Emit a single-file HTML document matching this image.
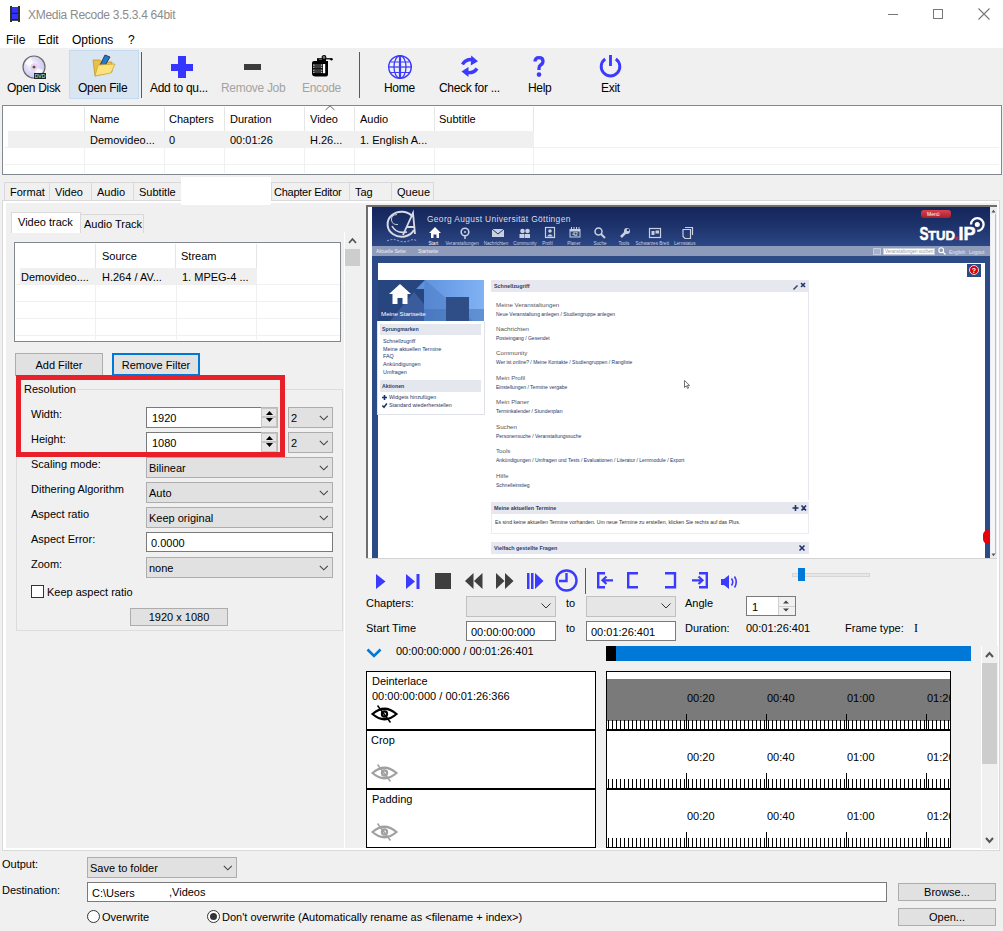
<!DOCTYPE html><html><head><meta charset="utf-8"><style>
html,body{margin:0;padding:0}
body{width:1003px;height:931px;overflow:hidden;position:relative;background:#f0f0f0;font-family:"Liberation Sans", sans-serif;font-size:11px;color:#000}
.a{position:absolute;box-sizing:border-box}
.t{white-space:nowrap;line-height:14px;height:14px}
svg.a{overflow:visible}
</style></head><body>
<div class="a" style="left:0px;top:0px;width:1003px;height:30px;background:#fff"></div>
<svg class="a" style="left:10px;top:6px;" width="10" height="16" viewBox="0 0 10 16"><rect x="2" y="1" width="6" height="14" fill="#1c1c6a"/><rect x="2" y="1" width="6" height="0.8" fill="#555040"/><rect x="2" y="14.2" width="6" height="0.8" fill="#555040"/><rect x="2" y="2" width="6" height="4.8" fill="#3434ff"/><rect x="2" y="8" width="6" height="5" fill="#3434ff"/><rect x="0" y="0" width="2" height="16" fill="#2e2e2a"/><rect x="8" y="0" width="2" height="16" fill="#2e2e2a"/></svg>
<div class="a t" style="left:28px;top:8px;color:#8c8c8c;font-size:12px;letter-spacing:-0.28px">XMedia Recode 3.5.3.4 64bit</div>
<div class="a" style="left:888px;top:14px;width:10px;height:1px;background:#777"></div>
<div class="a" style="left:933px;top:9px;width:10px;height:10px;border:1px solid #777"></div>
<svg class="a" style="left:978px;top:8px;" width="12" height="12" viewBox="0 0 12 12"><path d="M0.5 0.5 L11.5 11.5 M11.5 0.5 L0.5 11.5" stroke="#777" stroke-width="1.1"/></svg>
<div class="a" style="left:0px;top:30px;width:1003px;height:18px;background:#fff"></div>
<div class="a t" style="left:6px;top:33px;font-size:12px">File</div>
<div class="a t" style="left:38px;top:33px;font-size:12px">Edit</div>
<div class="a t" style="left:72px;top:33px;font-size:12px">Options</div>
<div class="a t" style="left:128px;top:33px;font-size:12px">?</div>
<div class="a" style="left:69px;top:50px;width:70px;height:49px;background:#d9e5f1;border:1px solid #c3dcf3"></div>
<div class="a" style="left:141px;top:52px;width:1px;height:46px;background:#5a5a5a"></div>
<div class="a" style="left:359px;top:52px;width:1px;height:46px;background:#5a5a5a"></div>
<div class="a t" style="left:7px;top:81px;font-size:12px;letter-spacing:-0.3px">Open Disk</div>
<div class="a t" style="left:78px;top:81px;font-size:12px;letter-spacing:-0.3px">Open File</div>
<div class="a t" style="left:150px;top:81px;font-size:12px;letter-spacing:-0.3px">Add to qu...</div>
<div class="a t" style="left:221px;top:81px;font-size:12px;letter-spacing:-0.3px;color:#a3a3a3">Remove Job</div>
<div class="a t" style="left:302px;top:81px;font-size:12px;letter-spacing:-0.3px;color:#a3a3a3">Encode</div>
<div class="a t" style="left:384px;top:81px;font-size:12px;letter-spacing:-0.3px">Home</div>
<div class="a t" style="left:439px;top:81px;font-size:12px;letter-spacing:-0.3px">Check for ...</div>
<div class="a t" style="left:528px;top:81px;font-size:12px;letter-spacing:-0.3px">Help</div>
<div class="a t" style="left:601px;top:81px;font-size:12px;letter-spacing:-0.3px">Exit</div>
<svg class="a" style="left:22px;top:55px;" width="25" height="25" viewBox="0 0 25 25"><defs><radialGradient id="dg" cx="0.4" cy="0.4" r="0.7"><stop offset="0" stop-color="#fff"/><stop offset="0.5" stop-color="#dcd8f6"/><stop offset="1" stop-color="#c9c4ef"/></radialGradient></defs>
<circle cx="12" cy="12" r="11" fill="url(#dg)" stroke="#6a6a6a" stroke-width="1.2"/>
<path d="M12 12 L3 9 A10 10 0 0 1 9 2.5 Z" fill="#fff" opacity="0.8"/>
<path d="M12 12 L21 15 A10 10 0 0 1 15 21.5 Z" fill="#fff" opacity="0.8"/>
<circle cx="12" cy="12" r="3.2" fill="#f4e8f4" stroke="#e6b6e6" stroke-width="0.8"/>
<circle cx="12" cy="12" r="1.6" fill="#555"/>
<rect x="12" y="18" width="12" height="6" fill="#1c2626"/>
<text x="18" y="23" font-size="5" fill="#cfe" text-anchor="middle" font-family="Liberation Sans">DVD</text></svg>
<svg class="a" style="left:92px;top:54px;" width="24" height="24" viewBox="0 0 24 24"><path d="M1 6 L8 6 L10 8 L20 8 L20 18 L3 22 Z" fill="#e8c14a" stroke="#b89020" stroke-width="0.7"/>
<path d="M13 1 L18 3 L11 15 L7 13 Z" fill="#1d7ad8" stroke="#333" stroke-width="0.9"/>
<path d="M3 22 L6 11 L23 10 L19 19 Z" fill="#fbe27c" stroke="#c9a030" stroke-width="0.7"/></svg>
<div class="a" style="left:171px;top:64px;width:22px;height:7px;background:#3535ff"></div>
<div class="a" style="left:178px;top:56px;width:8px;height:22px;background:#3535ff"></div>
<div class="a" style="left:244px;top:64px;width:17px;height:6px;background:#3c3c3c"></div>
<svg class="a" style="left:310px;top:54px;" width="24" height="25" viewBox="0 0 24 25"><path d="M4 7 L18 7 L18 20.5 Q18 22.5 16 22.5 L5.5 22.5 Q2 22.5 2 19.5 L2 9 Q2 7 4 7 Z" fill="#000"/>
<rect x="7" y="4.2" width="9" height="3.2" fill="#000"/><rect x="9" y="5" width="3" height="1" fill="#555"/>
<circle cx="14" cy="3.4" r="1.9" fill="#777" stroke="#000" stroke-width="1.1"/>
<path d="M15.8 4.8 L21.5 4.8" stroke="#000" stroke-width="1.3"/><circle cx="21.5" cy="5.2" r="1.2" fill="#000"/>
<rect x="3" y="10" width="9.4" height="9.2" fill="#3c3c3c"/><rect x="3" y="14.3" width="9.4" height="0.8" fill="#000"/>
<g fill="#ddd"><rect x="3.3" y="10.5" width="1" height="1.3"/><rect x="3.3" y="13" width="1" height="0.9"/><rect x="3.3" y="15.8" width="1" height="1.1"/><rect x="3.3" y="18" width="1" height="1"/>
<rect x="11.2" y="10.5" width="1" height="1.3"/><rect x="11.2" y="13" width="1" height="0.9"/><rect x="11.2" y="15.8" width="1" height="1.1"/><rect x="11.2" y="18" width="1" height="1"/></g>
<rect x="13" y="10" width="2.2" height="9.2" fill="#fff"/></svg>
<svg class="a" style="left:387px;top:54px;" width="26" height="26" viewBox="0 0 26 26"><g fill="none" stroke="#3b3bff"><circle cx="13" cy="13" r="11.3" stroke-width="1.4"/><ellipse cx="13" cy="13" rx="6" ry="11.3" stroke-width="1.3"/><line x1="13" y1="1.5" x2="13" y2="24.5" stroke-width="2.2"/><path d="M1.8 13 H24.2" stroke-width="1.3"/><path d="M3.5 8 H22.5 M3.5 18.5 H22.5" stroke-width="1.2"/></g></svg>
<svg class="a" style="left:461px;top:55px;" width="18" height="23" viewBox="0 0 18 23"><g fill="#3b3bff"><path d="M1.5 9.5 Q4.5 4.2 11 4.6" stroke="#3b3bff" stroke-width="3.4" fill="none"/><path d="M10.2 0.5 L17 6.3 L9.8 10.5 Z"/>
<path d="M16 13.5 Q13 18.2 6.5 17.6" stroke="#3b3bff" stroke-width="3.4" fill="none"/><path d="M7.5 22 L0.5 16.6 L7.5 12 Z"/></g></svg>
<svg class="a" style="left:531px;top:55px;" width="16" height="24" viewBox="0 0 16 24"><path d="M4 6.5 Q4 2.6 8 2.6 Q12 2.6 12 6.2 Q12 8.6 9.6 10 Q8 11 8 13.2 V15" fill="none" stroke="#3b3bff" stroke-width="3.3"/><circle cx="8" cy="19.6" r="2.3" fill="#3b3bff"/></svg>
<svg class="a" style="left:598px;top:54px;" width="26" height="26" viewBox="0 0 26 26"><g fill="none" stroke="#3b3bff" stroke-width="2.9"><path d="M7.2 5 A9.3 9.3 0 1 0 17.8 5"/><line x1="12.5" y1="1" x2="12.5" y2="12"/></g></svg>
<div class="a" style="left:2px;top:105px;width:1000px;height:70px;background:#fff;border:1px solid #828790"></div>
<div class="a" style="left:84px;top:107px;width:1px;height:24px;background:#e5e5e5"></div>
<div class="a" style="left:164px;top:107px;width:1px;height:24px;background:#e5e5e5"></div>
<div class="a" style="left:224px;top:107px;width:1px;height:24px;background:#e5e5e5"></div>
<div class="a" style="left:304px;top:107px;width:1px;height:24px;background:#e5e5e5"></div>
<div class="a" style="left:354px;top:107px;width:1px;height:24px;background:#e5e5e5"></div>
<div class="a" style="left:434px;top:107px;width:1px;height:24px;background:#e5e5e5"></div>
<div class="a" style="left:533px;top:107px;width:1px;height:24px;background:#e5e5e5"></div>
<div class="a" style="left:8px;top:131px;width:526px;height:16px;background:#f0f0f0"></div>
<div class="a" style="left:4px;top:147px;width:995px;height:1px;background:#f0f0f0"></div>
<div class="a" style="left:4px;top:164px;width:995px;height:1px;background:#f0f0f0"></div>
<div class="a" style="left:84px;top:147px;width:1px;height:26px;background:#f0f0f0"></div>
<div class="a" style="left:164px;top:147px;width:1px;height:26px;background:#f0f0f0"></div>
<div class="a" style="left:224px;top:147px;width:1px;height:26px;background:#f0f0f0"></div>
<div class="a" style="left:304px;top:147px;width:1px;height:26px;background:#f0f0f0"></div>
<div class="a" style="left:354px;top:147px;width:1px;height:26px;background:#f0f0f0"></div>
<div class="a" style="left:434px;top:147px;width:1px;height:26px;background:#f0f0f0"></div>
<div class="a" style="left:533px;top:147px;width:1px;height:26px;background:#f0f0f0"></div>
<div class="a t" style="left:90px;top:112px;">Name</div>
<div class="a t" style="left:169px;top:112px;">Chapters</div>
<div class="a t" style="left:230px;top:112px;">Duration</div>
<div class="a t" style="left:310px;top:112px;">Video</div>
<div class="a t" style="left:360px;top:112px;">Audio</div>
<div class="a t" style="left:439px;top:112px;">Subtitle</div>
<div class="a t" style="left:90px;top:133px;">Demovideo...</div>
<div class="a t" style="left:169px;top:133px;">0</div>
<div class="a t" style="left:230px;top:133px;">00:01:26</div>
<div class="a t" style="left:310px;top:133px;">H.26...</div>
<div class="a t" style="left:360px;top:133px;">1. English A...</div>
<svg class="a" style="left:325px;top:105px;" width="10" height="6" viewBox="0 0 10 6"><path d="M0.5 5 L5 0.8 L9.5 5" fill="none" stroke="#666" stroke-width="1"/></svg>
<div class="a" style="left:4px;top:182px;width:46px;height:19px;background:#f0f0f0;border:1px solid #d9d9d9"></div>
<div class="a t" style="left:10px;top:185px;">Format</div>
<div class="a" style="left:49px;top:182px;width:43px;height:19px;background:#f0f0f0;border:1px solid #d9d9d9"></div>
<div class="a t" style="left:55px;top:185px;">Video</div>
<div class="a" style="left:91px;top:182px;width:43px;height:19px;background:#f0f0f0;border:1px solid #d9d9d9"></div>
<div class="a t" style="left:97px;top:185px;">Audio</div>
<div class="a" style="left:133px;top:182px;width:49px;height:19px;background:#f0f0f0;border:1px solid #d9d9d9"></div>
<div class="a t" style="left:139px;top:185px;">Subtitle</div>
<div class="a" style="left:271px;top:182px;width:79px;height:19px;background:#f0f0f0;border:1px solid #d9d9d9"></div>
<div class="a t" style="left:274px;top:185px;letter-spacing:-0.25px">Chapter Editor</div>
<div class="a" style="left:349px;top:182px;width:43px;height:19px;background:#f0f0f0;border:1px solid #d9d9d9"></div>
<div class="a t" style="left:355px;top:185px;">Tag</div>
<div class="a" style="left:391px;top:182px;width:43px;height:19px;background:#f0f0f0;border:1px solid #d9d9d9"></div>
<div class="a t" style="left:397px;top:185px;">Queue</div>
<div class="a" style="left:2px;top:200px;width:998px;height:651px;background:#f0f0f0;border:1px solid #d9d9d9"></div>
<div class="a" style="left:3px;top:201px;width:3px;height:648px;background:#fff"></div>
<div class="a" style="left:3px;top:201px;width:996px;height:2px;background:#fff"></div>
<div class="a" style="left:997px;top:201px;width:2px;height:649px;background:#fff"></div>
<div class="a" style="left:3px;top:848px;width:996px;height:2px;background:#fff"></div>
<div class="a" style="left:181px;top:177px;width:90px;height:28px;background:#fff"></div>
<div class="a" style="left:80px;top:214px;width:64px;height:19px;background:#f0f0f0;border:1px solid #d9d9d9;border-bottom:none"></div>
<div class="a t" style="left:84px;top:217px;">Audio Track</div>
<div class="a" style="left:11px;top:212px;width:70px;height:21px;background:#fff;border:1px solid #d9d9d9;border-bottom:none"></div>
<div class="a t" style="left:18px;top:215px;">Video track</div>
<div class="a" style="left:344px;top:232px;width:1px;height:616px;background:#fff"></div>
<svg class="a" style="left:348px;top:237px;" width="9" height="7" viewBox="0 0 9 7"><path d="M1 6 L4.5 2 L8 6" fill="none" stroke="#555" stroke-width="1.8"/></svg>
<div class="a" style="left:345px;top:249px;width:15px;height:17px;background:#cdcdcd"></div>
<div class="a" style="left:14px;top:242px;width:327px;height:100px;background:#fff;border:1px solid #828790"></div>
<div class="a" style="left:95px;top:244px;width:1px;height:24px;background:#e5e5e5"></div>
<div class="a" style="left:175px;top:244px;width:1px;height:24px;background:#e5e5e5"></div>
<div class="a" style="left:256px;top:244px;width:1px;height:24px;background:#e5e5e5"></div>
<div class="a" style="left:20px;top:268px;width:237px;height:16px;background:#f0f0f0"></div>
<div class="a" style="left:16px;top:284px;width:324px;height:1px;background:#f0f0f0"></div>
<div class="a" style="left:16px;top:301px;width:324px;height:1px;background:#f0f0f0"></div>
<div class="a" style="left:16px;top:318px;width:324px;height:1px;background:#f0f0f0"></div>
<div class="a" style="left:16px;top:335px;width:324px;height:1px;background:#f0f0f0"></div>
<div class="a" style="left:95px;top:284px;width:1px;height:56px;background:#f0f0f0"></div>
<div class="a" style="left:176px;top:284px;width:1px;height:56px;background:#f0f0f0"></div>
<div class="a" style="left:256px;top:284px;width:1px;height:56px;background:#f0f0f0"></div>
<div class="a t" style="left:102px;top:249px;">Source</div>
<div class="a t" style="left:181px;top:249px;">Stream</div>
<div class="a t" style="left:21px;top:270px;">Demovideo....</div>
<div class="a t" style="left:102px;top:270px;">H.264 / AV...</div>
<div class="a t" style="left:182px;top:270px;">1. MPEG-4 ...</div>
<div class="a" style="left:15px;top:353px;width:88px;height:23px;background:#e1e1e1;border:1px solid #adadad"></div>
<div class="a t" style="left:15px;width:88px;text-align:center;top:358px;">Add Filter</div>
<div class="a" style="left:112px;top:353px;width:88px;height:23px;background:#e1e1e1;border:2px solid #0078d7"></div>
<div class="a t" style="left:112px;width:88px;text-align:center;top:358px;">Remove Filter</div>
<div class="a" style="left:16px;top:389px;width:327px;height:242px;border:1px solid #dcdcdc"></div>
<div class="a" style="left:22px;top:382px;width:54px;height:14px;background:#f0f0f0"></div>
<div class="a t" style="left:24px;top:382px;">Resolution</div>
<div class="a t" style="left:31px;top:407px;">Width:</div>
<div class="a" style="left:146px;top:407px;width:116px;height:21px;background:#fff;border:1px solid #7a7a7a"></div>
<div class="a t" style="left:152px;top:411px;">1920</div>
<div class="a" style="left:261px;top:407px;width:17px;height:21px;background:#fff;border:1px solid #b9b9b9;border-left:none"></div>
<div class="a" style="left:261px;top:408px;width:16px;height:19px;background:#e6e6e6;border:1px solid #c6c6c6"></div>
<div class="a" style="left:262px;top:416px;width:14px;height:2px;background:#c6c6c6"></div>
<svg class="a" style="left:265px;top:410px;" width="9" height="15" viewBox="0 0 9 15"><path d="M1 5 L8 5 L4.5 1 Z M1 8 L8 8 L4.5 12 Z" fill="#000"/></svg>
<div class="a t" style="left:31px;top:432px;">Height:</div>
<div class="a" style="left:146px;top:432px;width:116px;height:21px;background:#fff;border:1px solid #7a7a7a"></div>
<div class="a t" style="left:152px;top:436px;">1080</div>
<div class="a" style="left:261px;top:432px;width:17px;height:21px;background:#fff;border:1px solid #b9b9b9;border-left:none"></div>
<div class="a" style="left:261px;top:433px;width:16px;height:19px;background:#e6e6e6;border:1px solid #c6c6c6"></div>
<div class="a" style="left:262px;top:441px;width:14px;height:2px;background:#c6c6c6"></div>
<svg class="a" style="left:265px;top:435px;" width="9" height="15" viewBox="0 0 9 15"><path d="M1 5 L8 5 L4.5 1 Z M1 8 L8 8 L4.5 12 Z" fill="#000"/></svg>
<div class="a" style="left:288px;top:407px;width:45px;height:21px;background:#e1e1e1;border:1px solid #adadad"></div>
<div class="a t" style="left:291px;top:411px;">2</div>
<svg class="a" style="left:319px;top:415px;" width="10" height="6" viewBox="0 0 10 6"><path d="M0.8 0.8 L4.8 4.8 L8.8 0.8" fill="none" stroke="#444" stroke-width="1.1"/></svg>
<div class="a" style="left:288px;top:432px;width:45px;height:21px;background:#e1e1e1;border:1px solid #adadad"></div>
<div class="a t" style="left:291px;top:436px;">2</div>
<svg class="a" style="left:319px;top:440px;" width="10" height="6" viewBox="0 0 10 6"><path d="M0.8 0.8 L4.8 4.8 L8.8 0.8" fill="none" stroke="#444" stroke-width="1.1"/></svg>
<div class="a t" style="left:31px;top:457px;">Scaling mode:</div>
<div class="a" style="left:146px;top:457px;width:187px;height:21px;background:#e1e1e1;border:1px solid #adadad"></div>
<div class="a t" style="left:149px;top:461px;">Bilinear</div>
<svg class="a" style="left:319px;top:465px;" width="10" height="6" viewBox="0 0 10 6"><path d="M0.8 0.8 L4.8 4.8 L8.8 0.8" fill="none" stroke="#444" stroke-width="1.1"/></svg>
<div class="a t" style="left:31px;top:482px;">Dithering Algorithm</div>
<div class="a" style="left:146px;top:482px;width:187px;height:21px;background:#e1e1e1;border:1px solid #adadad"></div>
<div class="a t" style="left:149px;top:486px;">Auto</div>
<svg class="a" style="left:319px;top:490px;" width="10" height="6" viewBox="0 0 10 6"><path d="M0.8 0.8 L4.8 4.8 L8.8 0.8" fill="none" stroke="#444" stroke-width="1.1"/></svg>
<div class="a t" style="left:31px;top:507px;">Aspect ratio</div>
<div class="a" style="left:146px;top:507px;width:187px;height:21px;background:#e1e1e1;border:1px solid #adadad"></div>
<div class="a t" style="left:149px;top:511px;">Keep original</div>
<svg class="a" style="left:319px;top:515px;" width="10" height="6" viewBox="0 0 10 6"><path d="M0.8 0.8 L4.8 4.8 L8.8 0.8" fill="none" stroke="#444" stroke-width="1.1"/></svg>
<div class="a t" style="left:31px;top:532px;">Aspect Error:</div>
<div class="a" style="left:146px;top:532px;width:187px;height:20px;background:#fff;border:1px solid #7a7a7a"></div>
<div class="a t" style="left:151px;top:536px;">0.0000</div>
<div class="a t" style="left:31px;top:557px;">Zoom:</div>
<div class="a" style="left:146px;top:557px;width:187px;height:21px;background:#e1e1e1;border:1px solid #adadad"></div>
<div class="a t" style="left:149px;top:561px;">none</div>
<svg class="a" style="left:319px;top:565px;" width="10" height="6" viewBox="0 0 10 6"><path d="M0.8 0.8 L4.8 4.8 L8.8 0.8" fill="none" stroke="#444" stroke-width="1.1"/></svg>
<div class="a" style="left:31px;top:585px;width:13px;height:13px;background:#fff;border:1px solid #333"></div>
<div class="a t" style="left:47px;top:585px;">Keep aspect ratio</div>
<div class="a" style="left:130px;top:608px;width:98px;height:18px;background:#e1e1e1;border:1px solid #adadad"></div>
<div class="a t" style="left:130px;width:98px;text-align:center;top:610px;">1920 x 1080</div>
<div class="a" style="left:16px;top:375px;width:269px;height:82px;border:5px solid #e8202a"></div>
<div class="a" style="left:366px;top:205px;width:631px;height:354px;background:#f4f4f4"></div>
<div class="a" style="left:366px;top:205px;width:631px;height:2px;background:#6e6e6e"></div>
<div class="a" style="left:366px;top:205px;width:2px;height:353px;background:#6e6e6e"></div>
<div class="a" style="left:368px;top:207px;width:4px;height:351px;background:#fff"></div>
<div class="a" style="left:372px;top:207px;width:618px;height:39px;background:linear-gradient(180deg,#14255a 0%,#1e336c 50%,#2b4785 100%)"></div>
<div class="a" style="left:372px;top:246px;width:618px;height:10px;background:#8e9bbb"></div>
<div class="a" style="left:372px;top:256px;width:618px;height:7px;background:#2c4a86"></div>
<div class="a" style="left:372px;top:263px;width:6px;height:295px;background:#2c4a86"></div>
<div class="a" style="left:985px;top:263px;width:5px;height:295px;background:#2c4a86"></div>
<div class="a" style="left:378px;top:263px;width:607px;height:295px;background:#fff"></div>
<svg class="a" style="left:383px;top:210px;" width="40" height="34" viewBox="0 0 40 34"><g fill="none" stroke="#d8dbe6"><path d="M30 7 A14 12.5 0 1 0 31 20" stroke-width="2"/><path d="M14 4.5 Q8 5 8.5 10 Q9 15 15 14.5" stroke-width="0.9"/><path d="M9 16 Q13 24 24 22" stroke-width="1.6"/><path d="M20 25 L30 3 L32 24 M24 17 L31 17" stroke-width="1.8"/><path d="M4 31 Q10 28 16 31 Q22 33 28 30 Q31 29 34 31" stroke-width="0.7" stroke-dasharray="2 1.5"/></g></svg>
<div class="a" style="left:427px;top:214.0px;font-size:8.4px;line-height:10.1px;white-space:nowrap;color:#d9dde9;letter-spacing:0.35px">Georg August Universität Göttingen</div>
<svg class="a" style="left:429px;top:227px;" width="12" height="11" viewBox="0 0 12 11"><path d="M6 0 L12 6 L10 6 L10 11 L7.5 11 L7.5 7.5 L4.5 7.5 L4.5 11 L2 11 L2 6 L0 6 Z" fill="#fff"/></svg>
<div class="a" style="left:428.5px;top:240.7px;font-size:4.6px;line-height:5.5px;white-space:nowrap;color:#fff;">Start</div>
<svg class="a" style="left:459px;top:227px;" width="12" height="12" viewBox="0 0 12 12"><circle cx="6" cy="5" r="3.8" stroke="#c9d0e2" stroke-width="1.6" fill="none"/><circle cx="6" cy="5" r="1" fill="#c9d0e2"/><path d="M6 9 L6 12" stroke="#c9d0e2" stroke-width="1.5"/></svg>
<div class="a" style="left:445.5px;top:240.7px;font-size:4.6px;line-height:5.5px;white-space:nowrap;color:#c9d0e2;">Veranstaltungen</div>
<svg class="a" style="left:492px;top:229px;" width="12" height="8" viewBox="0 0 12 8"><rect x="0" y="0" width="12" height="8" fill="#c9d0e2"/><path d="M0 0 L6 5 L12 0" stroke="#1e336c" fill="none"/></svg>
<div class="a" style="left:483.7px;top:240.7px;font-size:4.6px;line-height:5.5px;white-space:nowrap;color:#c9d0e2;">Nachrichten</div>
<svg class="a" style="left:519px;top:228px;" width="12" height="10" viewBox="0 0 12 10"><circle cx="3.5" cy="3" r="2.3" fill="#c9d0e2"/><circle cx="8.5" cy="3" r="2.3" fill="#c9d0e2"/><rect x="0.5" y="6" width="5" height="4" fill="#c9d0e2"/><rect x="6" y="6" width="5" height="4" fill="#c9d0e2"/></svg>
<div class="a" style="left:513.3px;top:240.7px;font-size:4.6px;line-height:5.5px;white-space:nowrap;color:#c9d0e2;">Community</div>
<svg class="a" style="left:545px;top:227px;" width="10" height="11" viewBox="0 0 10 11"><rect x="0.5" y="0.5" width="9" height="10" fill="none" stroke="#c9d0e2" stroke-width="1.2"/><circle cx="5" cy="4" r="1.8" fill="#c9d0e2"/><path d="M2 9.5 Q5 5 8 9.5 Z" fill="#c9d0e2"/></svg>
<div class="a" style="left:542.2px;top:240.7px;font-size:4.6px;line-height:5.5px;white-space:nowrap;color:#c9d0e2;">Profil</div>
<svg class="a" style="left:569px;top:227px;" width="12" height="11" viewBox="0 0 12 11"><rect x="0.5" y="2" width="11" height="8.5" fill="#c9d0e2"/><rect x="1.5" y="4.5" width="9" height="5" fill="#2a4480"/><path d="M2.5 0 V3 M5 0 V3 M7.5 0 V3 M10 0 V3" stroke="#c9d0e2" stroke-width="1"/><text x="6" y="9.3" font-size="5" fill="#c9d0e2" text-anchor="middle" font-family="Liberation Sans" font-weight="bold">42</text></svg>
<div class="a" style="left:567.2px;top:240.7px;font-size:4.6px;line-height:5.5px;white-space:nowrap;color:#c9d0e2;">Planer</div>
<svg class="a" style="left:594px;top:227px;" width="12" height="12" viewBox="0 0 12 12"><circle cx="4.5" cy="4.5" r="3.5" stroke="#c9d0e2" stroke-width="1.5" fill="none"/><path d="M7 7 L11 11" stroke="#c9d0e2" stroke-width="2"/></svg>
<div class="a" style="left:593.5px;top:240.7px;font-size:4.6px;line-height:5.5px;white-space:nowrap;color:#c9d0e2;">Suche</div>
<svg class="a" style="left:619px;top:227px;" width="12" height="12" viewBox="0 0 12 12"><path d="M2 10 L7 5" stroke="#c9d0e2" stroke-width="2.5"/><circle cx="8" cy="4" r="3" fill="#c9d0e2"/><circle cx="9" cy="3" r="1.3" fill="#1e336c"/></svg>
<div class="a" style="left:618.5px;top:240.7px;font-size:4.6px;line-height:5.5px;white-space:nowrap;color:#c9d0e2;">Tools</div>
<svg class="a" style="left:649px;top:228px;" width="12" height="10" viewBox="0 0 12 10"><rect x="0.5" y="0.5" width="11" height="9" fill="none" stroke="#c9d0e2" stroke-width="1.2"/><rect x="2.5" y="3" width="3" height="4" fill="#c9d0e2"/><rect x="6.5" y="2.5" width="3.5" height="3" fill="#c9d0e2"/></svg>
<div class="a" style="left:635.5px;top:240.7px;font-size:4.6px;line-height:5.5px;white-space:nowrap;color:#c9d0e2;">Schwarzes Brett</div>
<svg class="a" style="left:682px;top:227px;" width="11" height="12" viewBox="0 0 11 12"><path d="M3 0.5 H10.5 V8 M1 2.5 H8.5 V11.5 H3 L1 9.5 Z" fill="none" stroke="#c9d0e2" stroke-width="1.2"/></svg>
<div class="a" style="left:674.0px;top:240.7px;font-size:4.6px;line-height:5.5px;white-space:nowrap;color:#c9d0e2;">Lernstatus</div>
<div class="a" style="left:921px;top:210px;width:30px;height:8px;background:linear-gradient(#d8434f,#a8202c);border-radius:3px"></div>
<div class="a" style="left:927px;top:211.0px;font-size:5px;line-height:6.0px;white-space:nowrap;color:#fff;">Menü</div>
<svg class="a" style="left:916px;top:212px;" width="74" height="32" viewBox="0 0 74 32"><g font-family="Liberation Sans" font-weight="bold" fill="#fff" stroke="#fff" stroke-width="0.5">
<text x="3.5" y="28" font-size="17.5" textLength="9" lengthAdjust="spacingAndGlyphs">S</text>
<text x="12" y="28" font-size="13.5" textLength="27" lengthAdjust="spacingAndGlyphs">TUD</text>
<rect x="39.3" y="24.6" width="3" height="3.4" fill="#d0203a" stroke="none"/>
<text x="42.5" y="28" font-size="17.5" textLength="17" lengthAdjust="spacingAndGlyphs">IP</text></g>
<path d="M55 12.5 A6.3 6.3 0 1 1 61.3 18.8" fill="none" stroke="#fff" stroke-width="2.3"/><circle cx="61.3" cy="12.5" r="2.5" fill="#fff"/></svg>
<div class="a" style="left:873px;top:248px;width:8px;height:7px;background:#a7b2cc;border:1px solid #c3cbe0"></div>
<div class="a" style="left:883px;top:248px;width:52px;height:7px;background:#fff;border:1px solid #c3cbe0"></div>
<div class="a" style="left:885px;top:248.8px;font-size:4.5px;line-height:5.4px;white-space:nowrap;color:#999;">Veranstaltungen suchen</div>
<svg class="a" style="left:938px;top:247px;" width="8" height="8" viewBox="0 0 8 8"><circle cx="3.2" cy="3.2" r="2.4" stroke="#fff" fill="none" stroke-width="1.1"/><path d="M5 5 L7.5 7.5" stroke="#fff" stroke-width="1.3"/></svg>
<div class="a" style="left:949px;top:248.5px;font-size:5px;line-height:6.0px;white-space:nowrap;color:#e4e8f2;">English</div>
<div class="a" style="left:969px;top:248.5px;font-size:5px;line-height:6.0px;white-space:nowrap;color:#e4e8f2;">Logout</div>
<div class="a" style="left:376px;top:248.6px;font-size:4.8px;line-height:5.8px;white-space:nowrap;color:#f0f2f8;">Aktuelle Seite:</div>
<div class="a" style="left:418px;top:248.6px;font-size:4.8px;line-height:5.8px;white-space:nowrap;color:#f0f2f8;">Startseite</div>
<div class="a" style="left:967px;top:264px;width:14px;height:13px;background:#2c4a86"></div>
<svg class="a" style="left:969px;top:265px;" width="10" height="10" viewBox="0 0 10 10"><circle cx="5" cy="5" r="4.5" fill="#d00" stroke="#fff" stroke-width="0.8"/><text x="5" y="7.8" font-size="7" fill="#fff" text-anchor="middle" font-weight="bold" font-family="Liberation Sans">?</text></svg>
<div class="a" style="left:983px;top:530px;width:10px;height:14px;background:#e8000a;border-radius:6px"></div>
<svg class="a" style="left:378px;top:280px;" width="106" height="41" viewBox="0 0 106 41"><defs><linearGradient id="sg" x1="0" x2="1"><stop offset="0" stop-color="#5b8fdc"/><stop offset="1" stop-color="#80b2f4"/></linearGradient></defs>
<rect width="106" height="41" fill="#27467f"/>
<path d="M12 41 L36 12 L60 41 Z" fill="#3a5c9c"/>
<path d="M38 9 L47 0 L106 0 L106 41 L46 41 L46 9 Z" fill="url(#sg)"/>
<path d="M47 0 L95 41 L46 41 L46 9 Z" fill="#4f7dc4" opacity="0.55"/>
<rect x="46" y="29" width="60" height="12" fill="#3f6bb0" opacity="0.45"/>
<rect x="68" y="17" width="23" height="24" fill="#2f4d86"/></svg>
<svg class="a" style="left:389px;top:284px;" width="22" height="20" viewBox="0 0 22 20"><path d="M11 0 L22 10 L18.5 10 L18.5 20 L13.5 20 L13.5 14 L8.5 14 L8.5 20 L3.5 20 L3.5 10 L0 10 Z" fill="#fff"/></svg>
<div class="a" style="left:381px;top:310.3px;font-size:6.2px;line-height:7.4px;white-space:nowrap;color:#fff;">Meine Startseite</div>
<div class="a" style="left:377px;top:321px;width:108px;height:94px;background:#fff;border:1px solid #dfe1e8;border-top:none"></div>
<div class="a" style="left:380px;top:324px;width:101px;height:11px;background:#e5e7ee"></div>
<div class="a" style="left:382px;top:326.4px;font-size:5.2px;line-height:6.2px;white-space:nowrap;color:#2a3e6a;font-weight:bold">Sprungmarken</div>
<div class="a" style="left:383px;top:337.8px;font-size:5.4px;line-height:6.5px;white-space:nowrap;color:#24386a;">Schnellzugriff</div>
<div class="a" style="left:383px;top:345.6px;font-size:5.4px;line-height:6.5px;white-space:nowrap;color:#24386a;">Meine aktuellen Termine</div>
<div class="a" style="left:383px;top:353.4px;font-size:5.4px;line-height:6.5px;white-space:nowrap;color:#24386a;">FAQ</div>
<div class="a" style="left:383px;top:361.2px;font-size:5.4px;line-height:6.5px;white-space:nowrap;color:#24386a;">Ankündigungen</div>
<div class="a" style="left:383px;top:369.0px;font-size:5.4px;line-height:6.5px;white-space:nowrap;color:#24386a;">Umfragen</div>
<div class="a" style="left:380px;top:380px;width:101px;height:12px;background:#e5e7ee"></div>
<div class="a" style="left:382px;top:382.9px;font-size:5.2px;line-height:6.2px;white-space:nowrap;color:#2a3e6a;font-weight:bold">Aktionen</div>
<svg class="a" style="left:382px;top:395px;" width="5" height="5" viewBox="0 0 5 5"><path d="M2.5 0 V5 M0 2.5 H5" stroke="#1e336c" stroke-width="1.6"/></svg>
<svg class="a" style="left:382px;top:403px;" width="5" height="5" viewBox="0 0 5 5"><path d="M0.3 2.5 L2 4.3 L4.8 0.5" stroke="#1e336c" stroke-width="1.5" fill="none"/></svg>
<div class="a" style="left:389px;top:394.3px;font-size:5.4px;line-height:6.5px;white-space:nowrap;color:#24386a;">Widgets hinzufügen</div>
<div class="a" style="left:389px;top:402.3px;font-size:5.4px;line-height:6.5px;white-space:nowrap;color:#24386a;">Standard wiederherstellen</div>
<div class="a" style="left:491px;top:280px;width:318px;height:12px;background:#e7e8ef"></div>
<div class="a" style="left:494px;top:282.8px;font-size:5.4px;line-height:6.5px;white-space:nowrap;color:#2a3e6a;font-weight:bold">Schnellzugriff</div>
<svg class="a" style="left:792px;top:282px;" width="14" height="8" viewBox="0 0 14 8"><path d="M1 7 L5 3 L6 4 L2 8 Z" fill="#2a3e6a"/><path d="M9 1 L13 5 M13 1 L9 5" stroke="#1e336c" stroke-width="1.5"/></svg>
<div class="a" style="left:808px;top:292px;width:1px;height:208px;background:#e6e6ec"></div>
<div class="a" style="left:496px;top:301.3px;font-size:6.2px;line-height:7.4px;white-space:nowrap;color:#555;">Meine Veranstaltungen</div>
<div class="a" style="left:496px;top:311.0px;font-size:5.0px;line-height:6.0px;white-space:nowrap;color:#24386a;">Neue Veranstaltung anlegen / Studiengruppe anlegen</div>
<div class="a" style="left:496px;top:325.3px;font-size:6.2px;line-height:7.4px;white-space:nowrap;color:#555;">Nachrichten</div>
<div class="a" style="left:496px;top:335.0px;font-size:5.0px;line-height:6.0px;white-space:nowrap;color:#24386a;">Posteingang / Gesendet</div>
<div class="a" style="left:496px;top:349.3px;font-size:6.2px;line-height:7.4px;white-space:nowrap;color:#555;">Community</div>
<div class="a" style="left:496px;top:359.0px;font-size:5.0px;line-height:6.0px;white-space:nowrap;color:#24386a;">Wer ist online? / Meine Kontakte / Studiengruppen / Rangliste</div>
<div class="a" style="left:496px;top:374.3px;font-size:6.2px;line-height:7.4px;white-space:nowrap;color:#555;">Mein Profil</div>
<div class="a" style="left:496px;top:384.0px;font-size:5.0px;line-height:6.0px;white-space:nowrap;color:#24386a;">Einstellungen / Termine vergabe</div>
<div class="a" style="left:496px;top:398.3px;font-size:6.2px;line-height:7.4px;white-space:nowrap;color:#555;">Mein Planer</div>
<div class="a" style="left:496px;top:408.0px;font-size:5.0px;line-height:6.0px;white-space:nowrap;color:#24386a;">Terminkalender / Stundenplan</div>
<div class="a" style="left:496px;top:423.3px;font-size:6.2px;line-height:7.4px;white-space:nowrap;color:#555;">Suchen</div>
<div class="a" style="left:496px;top:433.0px;font-size:5.0px;line-height:6.0px;white-space:nowrap;color:#24386a;">Personensuche / Veranstaltungssuche</div>
<div class="a" style="left:496px;top:447.3px;font-size:6.2px;line-height:7.4px;white-space:nowrap;color:#555;">Tools</div>
<div class="a" style="left:496px;top:457.0px;font-size:5.0px;line-height:6.0px;white-space:nowrap;color:#24386a;">Ankündigungen / Umfragen und Tests / Evaluationen / Literatur / Lernmodule / Export</div>
<div class="a" style="left:496px;top:472.3px;font-size:6.2px;line-height:7.4px;white-space:nowrap;color:#555;">Hilfe</div>
<div class="a" style="left:496px;top:482.0px;font-size:5.0px;line-height:6.0px;white-space:nowrap;color:#24386a;">Schnelleinstieg</div>
<div class="a" style="left:491px;top:502px;width:318px;height:12px;background:#e7e8ef"></div>
<div class="a" style="left:494px;top:504.8px;font-size:5.4px;line-height:6.5px;white-space:nowrap;color:#2a3e6a;font-weight:bold">Meine aktuellen Termine</div>
<svg class="a" style="left:793px;top:505px;" width="14" height="6" viewBox="0 0 14 6"><path d="M2.5 0 V6 M-0.5 3 H5.5 M8.5 0.5 L13 5.5 M13 0.5 L8.5 5.5" stroke="#1e336c" stroke-width="1.6"/></svg>
<div class="a" style="left:491px;top:514px;width:318px;height:20px;border:1px solid #ececf0;border-top:none"></div>
<div class="a" style="left:495px;top:518.9px;font-size:5.2px;line-height:6.2px;white-space:nowrap;color:#333;">Es sind keine aktuellen Termine vorhanden. Um neue Termine zu erstellen, klicken Sie rechts auf das Plus.</div>
<div class="a" style="left:491px;top:542px;width:318px;height:12px;background:#e7e8ef"></div>
<div class="a" style="left:494px;top:544.8px;font-size:5.4px;line-height:6.5px;white-space:nowrap;color:#2a3e6a;font-weight:bold">Vielfach gestellte Fragen</div>
<svg class="a" style="left:799px;top:545px;" width="6" height="6" viewBox="0 0 6 6"><path d="M0.5 0.5 L5.5 5.5 M5.5 0.5 L0.5 5.5" stroke="#1e336c" stroke-width="1.6"/></svg>
<div class="a" style="left:990px;top:207px;width:7px;height:351px;background:#ececf0"></div>
<div class="a" style="left:991px;top:214px;width:4px;height:340px;background:#f6f6f8"></div>
<div class="a" style="left:995px;top:214px;width:1px;height:340px;background:#bdbdc2"></div>
<svg class="a" style="left:991px;top:209px;" width="5" height="4" viewBox="0 0 5 4"><path d="M0.5 3.5 L2.5 0.8 L4.5 3.5 Z" fill="#555"/></svg>
<svg class="a" style="left:991px;top:553px;" width="5" height="4" viewBox="0 0 5 4"><path d="M0.5 0.5 L2.5 3.2 L4.5 0.5 Z" fill="#555"/></svg>
<div class="a" style="left:997px;top:205px;width:2px;height:354px;background:#fff"></div>
<div class="a" style="left:366px;top:558px;width:631px;height:1px;background:#d4d4d4"></div>
<svg class="a" style="left:684px;top:380px;" width="6" height="9" viewBox="0 0 6 9"><path d="M0.5 0.5 L0.5 7.5 L2.3 5.8 L3.6 8.5 L4.6 8 L3.4 5.4 L5.6 5.4 Z" fill="#fff" stroke="#333" stroke-width="0.7"/></svg>
<svg class="a" style="left:376px;top:574px;" width="10" height="15" viewBox="0 0 10 15"><path d="M0 0 L9.5 7.5 L0 15 Z" fill="#3b3bff"/></svg>
<svg class="a" style="left:406px;top:574px;" width="14" height="15" viewBox="0 0 14 15"><path d="M0 0 L9 7.5 L0 15 Z" fill="#3b3bff"/><rect x="10.5" y="0" width="3" height="15" fill="#3b3bff"/></svg>
<div class="a" style="left:435px;top:573px;width:16px;height:16px;background:#3f3f3f"></div>
<svg class="a" style="left:465px;top:573px;" width="18" height="16" viewBox="0 0 18 16"><path d="M8.5 0 L0 8 L8.5 16 Z M17.5 0 L9 8 L17.5 16 Z" fill="#3f3f3f"/></svg>
<svg class="a" style="left:496px;top:573px;" width="18" height="16" viewBox="0 0 18 16"><path d="M0 0 L8.5 8 L0 16 Z M9 0 L17.5 8 L9 16 Z" fill="#3f3f3f"/></svg>
<svg class="a" style="left:527px;top:573px;" width="17" height="16" viewBox="0 0 17 16"><rect x="0" y="0" width="2.5" height="16" fill="#3b3bff"/><rect x="4" y="0" width="2.5" height="16" fill="#3b3bff"/><path d="M8 0 L16.5 8 L8 16 Z" fill="#3b3bff"/></svg>
<svg class="a" style="left:555px;top:569px;" width="24" height="23" viewBox="0 0 24 23"><circle cx="11.5" cy="11.5" r="10" fill="none" stroke="#3b3bff" stroke-width="2.4"/><path d="M11.5 4 L11.5 12 L4 12" fill="none" stroke="#3b3bff" stroke-width="2.4"/></svg>
<div class="a" style="left:585px;top:568px;width:1px;height:26px;background:#5a5a5a"></div>
<svg class="a" style="left:597px;top:572px;" width="17" height="17" viewBox="0 0 17 17"><path d="M1.2 0 L1.2 16.5 M0 1.2 L8 1.2 M0 15.3 L8 15.3" stroke="#3b3bff" stroke-width="2.4" fill="none"/><path d="M16 8.3 L6 8.3 M9.5 4.5 L5.5 8.3 L9.5 12" stroke="#3b3bff" stroke-width="2.2" fill="none"/></svg>
<svg class="a" style="left:627px;top:572px;" width="13" height="17" viewBox="0 0 13 17"><path d="M11 1.2 L1.2 1.2 L1.2 15.3 L11 15.3" stroke="#3b3bff" stroke-width="2.4" fill="none"/></svg>
<svg class="a" style="left:665px;top:572px;" width="12" height="17" viewBox="0 0 12 17"><path d="M0 1.2 L10 1.2 L10 15.3 L0 15.3" stroke="#3b3bff" stroke-width="2.4" fill="none"/></svg>
<svg class="a" style="left:692px;top:572px;" width="16" height="17" viewBox="0 0 16 17"><path d="M14.8 0 L14.8 16.5 M15.5 1.2 L7 1.2 M15.5 15.3 L7 15.3" stroke="#3b3bff" stroke-width="2.4" fill="none"/><path d="M0 8.3 L10 8.3 M6.5 4.5 L10.5 8.3 L6.5 12" stroke="#3b3bff" stroke-width="2.2" fill="none"/></svg>
<svg class="a" style="left:721px;top:575px;" width="18" height="14" viewBox="0 0 18 14"><path d="M0 4 L3 4 L8 0 L8 14 L3 10 L0 10 Z" fill="#3b3bff"/><path d="M10.5 3.5 Q13 7 10.5 10.5 M13.5 1.5 Q17 7 13.5 12.5" stroke="#3b3bff" stroke-width="1.6" fill="none"/></svg>
<div class="a" style="left:792px;top:573px;width:78px;height:4px;background:#e7e7e7;border:1px solid #d6d6d6"></div>
<div class="a" style="left:798px;top:568px;width:7px;height:13px;background:#0078d7"></div>
<div class="a t" style="left:366px;top:596px;">Chapters:</div>
<div class="a" style="left:466px;top:596px;width:90px;height:21px;background:#e1e1e1;border:1px solid #adadad"></div>
<svg class="a" style="left:542px;top:604px;" width="10" height="6" viewBox="0 0 10 6"><path d="M0.8 0.8 L4.8 4.8 L8.8 0.8" fill="none" stroke="#444" stroke-width="1.1"/></svg>
<div class="a" style="left:467px;top:597px;width:88px;height:19px;background:#e6e6e6"></div>
<svg class="a" style="left:541px;top:603px;" width="10" height="6" viewBox="0 0 10 6"><path d="M0.5 0.5 L5 5 L9.5 0.5" fill="none" stroke="#333" stroke-width="1"/></svg>
<div class="a" style="left:466px;top:596px;width:90px;height:21px;border:1px solid #c0c0c0"></div>
<div class="a t" style="left:566px;top:596px;">to</div>
<div class="a" style="left:586px;top:596px;width:90px;height:21px;background:#e6e6e6;border:1px solid #c0c0c0"></div>
<svg class="a" style="left:661px;top:603px;" width="10" height="6" viewBox="0 0 10 6"><path d="M0.5 0.5 L5 5 L9.5 0.5" fill="none" stroke="#333" stroke-width="1"/></svg>
<div class="a t" style="left:685px;top:596px;">Angle</div>
<div class="a" style="left:746px;top:596px;width:50px;height:20px;background:#fff;border:1px solid #7a7a7a"></div>
<div class="a t" style="left:752px;top:600px;">1</div>
<div class="a" style="left:778px;top:597px;width:17px;height:18px;background:#f0f0f0;border-left:1px solid #d0d0d0"></div>
<div class="a" style="left:779px;top:606px;width:16px;height:1px;background:#d0d0d0"></div>
<svg class="a" style="left:782px;top:599px;" width="8" height="14" viewBox="0 0 8 14"><path d="M1 4.5 L4 1.5 L7 4.5 Z M1 9.5 L4 12.5 L7 9.5 Z" fill="#444"/></svg>
<div class="a t" style="left:366px;top:621px;">Start Time</div>
<div class="a" style="left:466px;top:621px;width:90px;height:20px;background:#fff;border:1px solid #7a7a7a"></div>
<div class="a t" style="left:471px;top:625px;">00:00:00:000</div>
<div class="a t" style="left:566px;top:621px;">to</div>
<div class="a" style="left:586px;top:621px;width:90px;height:20px;background:#fff;border:1px solid #7a7a7a"></div>
<div class="a t" style="left:591px;top:625px;">00:01:26:401</div>
<div class="a t" style="left:685px;top:621px;">Duration:</div>
<div class="a t" style="left:746px;top:621px;">00:01:26:401</div>
<div class="a t" style="left:845px;top:621px;">Frame type:</div>
<div class="a t" style="left:914px;top:621px;font-family:'Liberation Serif',serif;font-size:12px">I</div>
<svg class="a" style="left:366px;top:648px;" width="16" height="10" viewBox="0 0 16 10"><path d="M1.5 1.5 L8 8 L14.5 1.5" fill="none" stroke="#0078d7" stroke-width="2.6"/></svg>
<div class="a t" style="left:396px;top:644px;">00:00:00:000 / 00:01:26:401</div>
<div class="a" style="left:606px;top:646px;width:365px;height:15px;background:#0078d7"></div>
<div class="a" style="left:606px;top:646px;width:10px;height:15px;background:#000"></div>
<div class="a" style="left:366px;top:671px;width:230px;height:177px;background:#fff;border:1px solid #000"></div>
<div class="a" style="left:366px;top:729px;width:230px;height:1px;background:#000"></div>
<div class="a" style="left:366px;top:730px;width:230px;height:1px;background:#000"></div>
<div class="a" style="left:366px;top:788px;width:230px;height:1px;background:#000"></div>
<div class="a" style="left:366px;top:789px;width:230px;height:1px;background:#000"></div>
<div class="a t" style="left:372px;top:674px;">Deinterlace</div>
<div class="a t" style="left:372px;top:689px;">00:00:00:000 / 00:01:26:366</div>
<svg class="a" style="left:371px;top:705px;" width="27" height="18" viewBox="0 0 27 18"><g fill="none" stroke="#000" stroke-width="2.2"><path d="M1.5 9 Q13.5 -1.5 25.5 9 Q13.5 19.5 1.5 9 Z"/></g><circle cx="13.5" cy="9" r="2.6" fill="#fff" stroke="#000" stroke-width="2.2"/><path d="M6.5 0.5 L19.5 17.5" stroke="#000" stroke-width="1.5"/></svg>
<div class="a t" style="left:371px;top:733px;">Crop</div>
<svg class="a" style="left:371px;top:764px;" width="27" height="18" viewBox="0 0 27 18"><g fill="none" stroke="#a0a0a0" stroke-width="2.2"><path d="M1.5 9 Q13.5 -1.5 25.5 9 Q13.5 19.5 1.5 9 Z"/></g><circle cx="13.5" cy="9" r="2.6" fill="#fff" stroke="#a0a0a0" stroke-width="2.2"/><path d="M6.5 0.5 L19.5 17.5" stroke="#a0a0a0" stroke-width="1.5"/></svg>
<div class="a t" style="left:372px;top:792px;">Padding</div>
<svg class="a" style="left:371px;top:823px;" width="27" height="18" viewBox="0 0 27 18"><g fill="none" stroke="#a0a0a0" stroke-width="2.2"><path d="M1.5 9 Q13.5 -1.5 25.5 9 Q13.5 19.5 1.5 9 Z"/></g><circle cx="13.5" cy="9" r="2.6" fill="#fff" stroke="#a0a0a0" stroke-width="2.2"/><path d="M6.5 0.5 L19.5 17.5" stroke="#a0a0a0" stroke-width="1.5"/></svg>
<div class="a" style="left:606px;top:671px;width:345px;height:177px;background:#fff;border:1px solid #000"></div>
<div class="a" style="left:607px;top:679px;width:343px;height:42px;background:#7a7a7a"></div>
<div class="a" style="left:606px;top:729px;width:345px;height:1px;background:#000"></div>
<div class="a" style="left:606px;top:730px;width:345px;height:1px;background:#000"></div>
<div class="a" style="left:606px;top:788px;width:345px;height:1px;background:#000"></div>
<div class="a" style="left:606px;top:789px;width:345px;height:1px;background:#000"></div>
<svg class="a" style="left:606px;top:671px;" width="345" height="177" viewBox="0 0 345 177"><path d="M2.5 49 V58 M6.5 49 V58 M10.5 49 V58 M14.5 49 V58 M18.5 49 V58 M22.5 49 V58 M26.5 49 V58 M30.5 49 V58 M34.5 49 V58 M38.5 49 V58 M42.5 49 V58 M46.5 49 V58 M50.5 49 V58 M54.5 49 V58 M58.5 49 V58 M62.5 49 V58 M66.5 49 V58 M70.5 49 V58 M74.5 49 V58 M78.5 49 V58 M82.5 49 V58 M86.5 49 V58 M90.5 49 V58 M94.5 49 V58 M98.5 49 V58 M102.5 49 V58 M106.5 49 V58 M110.5 49 V58 M114.5 49 V58 M118.5 49 V58 M122.5 49 V58 M126.5 49 V58 M130.5 49 V58 M134.5 49 V58 M138.5 49 V58 M142.5 49 V58 M146.5 49 V58 M150.5 49 V58 M154.5 49 V58 M158.5 49 V58 M162.5 49 V58 M166.5 49 V58 M170.5 49 V58 M174.5 49 V58 M178.5 49 V58 M182.5 49 V58 M186.5 49 V58 M190.5 49 V58 M194.5 49 V58 M198.5 49 V58 M202.5 49 V58 M206.5 49 V58 M210.5 49 V58 M214.5 49 V58 M218.5 49 V58 M222.5 49 V58 M226.5 49 V58 M230.5 49 V58 M234.5 49 V58 M238.5 49 V58 M242.5 49 V58 M246.5 49 V58 M250.5 49 V58 M254.5 49 V58 M258.5 49 V58 M262.5 49 V58 M266.5 49 V58 M270.5 49 V58 M274.5 49 V58 M278.5 49 V58 M282.5 49 V58 M286.5 49 V58 M290.5 49 V58 M294.5 49 V58 M298.5 49 V58 M302.5 49 V58 M306.5 49 V58 M310.5 49 V58 M314.5 49 V58 M318.5 49 V58 M322.5 49 V58 M326.5 49 V58 M330.5 49 V58 M334.5 49 V58 M338.5 49 V58 M342.5 49 V58 M80.5 43 V58 M160.5 43 V58 M240.5 43 V58 M320.5 43 V58 M2.5 108 V117 M6.5 108 V117 M10.5 108 V117 M14.5 108 V117 M18.5 108 V117 M22.5 108 V117 M26.5 108 V117 M30.5 108 V117 M34.5 108 V117 M38.5 108 V117 M42.5 108 V117 M46.5 108 V117 M50.5 108 V117 M54.5 108 V117 M58.5 108 V117 M62.5 108 V117 M66.5 108 V117 M70.5 108 V117 M74.5 108 V117 M78.5 108 V117 M82.5 108 V117 M86.5 108 V117 M90.5 108 V117 M94.5 108 V117 M98.5 108 V117 M102.5 108 V117 M106.5 108 V117 M110.5 108 V117 M114.5 108 V117 M118.5 108 V117 M122.5 108 V117 M126.5 108 V117 M130.5 108 V117 M134.5 108 V117 M138.5 108 V117 M142.5 108 V117 M146.5 108 V117 M150.5 108 V117 M154.5 108 V117 M158.5 108 V117 M162.5 108 V117 M166.5 108 V117 M170.5 108 V117 M174.5 108 V117 M178.5 108 V117 M182.5 108 V117 M186.5 108 V117 M190.5 108 V117 M194.5 108 V117 M198.5 108 V117 M202.5 108 V117 M206.5 108 V117 M210.5 108 V117 M214.5 108 V117 M218.5 108 V117 M222.5 108 V117 M226.5 108 V117 M230.5 108 V117 M234.5 108 V117 M238.5 108 V117 M242.5 108 V117 M246.5 108 V117 M250.5 108 V117 M254.5 108 V117 M258.5 108 V117 M262.5 108 V117 M266.5 108 V117 M270.5 108 V117 M274.5 108 V117 M278.5 108 V117 M282.5 108 V117 M286.5 108 V117 M290.5 108 V117 M294.5 108 V117 M298.5 108 V117 M302.5 108 V117 M306.5 108 V117 M310.5 108 V117 M314.5 108 V117 M318.5 108 V117 M322.5 108 V117 M326.5 108 V117 M330.5 108 V117 M334.5 108 V117 M338.5 108 V117 M342.5 108 V117 M80.5 102 V117 M160.5 102 V117 M240.5 102 V117 M320.5 102 V117 M2.5 167 V176 M6.5 167 V176 M10.5 167 V176 M14.5 167 V176 M18.5 167 V176 M22.5 167 V176 M26.5 167 V176 M30.5 167 V176 M34.5 167 V176 M38.5 167 V176 M42.5 167 V176 M46.5 167 V176 M50.5 167 V176 M54.5 167 V176 M58.5 167 V176 M62.5 167 V176 M66.5 167 V176 M70.5 167 V176 M74.5 167 V176 M78.5 167 V176 M82.5 167 V176 M86.5 167 V176 M90.5 167 V176 M94.5 167 V176 M98.5 167 V176 M102.5 167 V176 M106.5 167 V176 M110.5 167 V176 M114.5 167 V176 M118.5 167 V176 M122.5 167 V176 M126.5 167 V176 M130.5 167 V176 M134.5 167 V176 M138.5 167 V176 M142.5 167 V176 M146.5 167 V176 M150.5 167 V176 M154.5 167 V176 M158.5 167 V176 M162.5 167 V176 M166.5 167 V176 M170.5 167 V176 M174.5 167 V176 M178.5 167 V176 M182.5 167 V176 M186.5 167 V176 M190.5 167 V176 M194.5 167 V176 M198.5 167 V176 M202.5 167 V176 M206.5 167 V176 M210.5 167 V176 M214.5 167 V176 M218.5 167 V176 M222.5 167 V176 M226.5 167 V176 M230.5 167 V176 M234.5 167 V176 M238.5 167 V176 M242.5 167 V176 M246.5 167 V176 M250.5 167 V176 M254.5 167 V176 M258.5 167 V176 M262.5 167 V176 M266.5 167 V176 M270.5 167 V176 M274.5 167 V176 M278.5 167 V176 M282.5 167 V176 M286.5 167 V176 M290.5 167 V176 M294.5 167 V176 M298.5 167 V176 M302.5 167 V176 M306.5 167 V176 M310.5 167 V176 M314.5 167 V176 M318.5 167 V176 M322.5 167 V176 M326.5 167 V176 M330.5 167 V176 M334.5 167 V176 M338.5 167 V176 M342.5 167 V176 M80.5 161 V176 M160.5 161 V176 M240.5 161 V176 M320.5 161 V176" stroke="#000" stroke-width="1"/></svg>
<div class="a t" style="left:687px;top:691px;">00:20</div>
<div class="a t" style="left:767px;top:691px;">00:40</div>
<div class="a t" style="left:847px;top:691px;">01:00</div>
<div class="a t" style="left:927px;top:691px;">01:20</div>
<div class="a t" style="left:687px;top:750px;">00:20</div>
<div class="a t" style="left:767px;top:750px;">00:40</div>
<div class="a t" style="left:847px;top:750px;">01:00</div>
<div class="a t" style="left:927px;top:750px;">01:20</div>
<div class="a t" style="left:687px;top:809px;">00:20</div>
<div class="a t" style="left:767px;top:809px;">00:40</div>
<div class="a t" style="left:847px;top:809px;">01:00</div>
<div class="a t" style="left:927px;top:809px;">01:20</div>
<div class="a" style="left:951px;top:671px;width:40px;height:177px;background:#f0f0f0"></div>
<div class="a" style="left:606px;top:671px;width:345px;height:177px;border:1px solid #000"></div>
<div class="a" style="left:981px;top:646px;width:17px;height:203px;background:#f0f0f0"></div>
<div class="a" style="left:981px;top:646px;width:1px;height:203px;background:#fff"></div>
<svg class="a" style="left:985px;top:651px;" width="9" height="7" viewBox="0 0 9 7"><path d="M1 6 L4.5 2 L8 6" fill="none" stroke="#555" stroke-width="2"/></svg>
<div class="a" style="left:982px;top:663px;width:15px;height:101px;background:#cdcdcd"></div>
<svg class="a" style="left:985px;top:837px;" width="9" height="7" viewBox="0 0 9 7"><path d="M1 1 L4.5 5 L8 1" fill="none" stroke="#555" stroke-width="2"/></svg>
<div class="a t" style="left:2px;top:857px;">Output:</div>
<div class="a" style="left:87px;top:857px;width:150px;height:21px;background:#e1e1e1;border:1px solid #adadad"></div>
<div class="a t" style="left:90px;top:861px;">Save to folder</div>
<svg class="a" style="left:223px;top:865px;" width="10" height="6" viewBox="0 0 10 6"><path d="M0.8 0.8 L4.8 4.8 L8.8 0.8" fill="none" stroke="#444" stroke-width="1.1"/></svg>
<div class="a t" style="left:2px;top:883px;">Destination:</div>
<div class="a" style="left:87px;top:882px;width:800px;height:20px;background:#fff;border:1px solid #7a7a7a"></div>
<div class="a t" style="left:92px;top:886px;">C:\Users</div>
<div class="a t" style="left:169px;top:885px;">,Videos</div>
<div class="a" style="left:898px;top:883px;width:98px;height:18px;background:#e1e1e1;border:1px solid #adadad"></div>
<div class="a t" style="left:898px;width:98px;text-align:center;top:885px;">Browse...</div>
<div class="a" style="left:898px;top:908px;width:98px;height:18px;background:#e1e1e1;border:1px solid #adadad"></div>
<div class="a t" style="left:898px;width:98px;text-align:center;top:910px;">Open...</div>
<svg class="a" style="left:87px;top:910px;" width="13" height="13" viewBox="0 0 13 13"><circle cx="6.5" cy="6.5" r="6" fill="#fff" stroke="#333" stroke-width="1"/></svg>
<div class="a t" style="left:102px;top:910px;">Overwrite</div>
<svg class="a" style="left:207px;top:910px;" width="13" height="13" viewBox="0 0 13 13"><circle cx="6.5" cy="6.5" r="6" fill="#fff" stroke="#333" stroke-width="1"/><circle cx="6.5" cy="6.5" r="3.5" fill="#333"/></svg>
<div class="a t" style="left:222px;top:910px;">Don&#39;t overwrite (Automatically rename as &lt;filename + index&gt;)</div>
</body></html>
